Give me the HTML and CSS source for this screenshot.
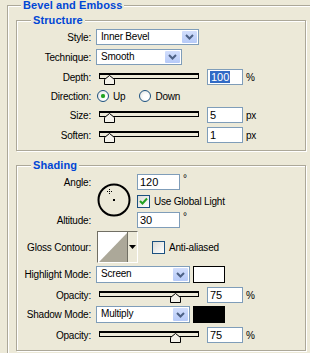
FILE: index.html
```html
<!DOCTYPE html>
<html>
<head>
<meta charset="utf-8">
<link rel="stylesheet" href="styles.css">
</head>
<body>
<section class="group outer">
  <h1 class="title t-outer">Bevel and Emboss</h1>

  <section class="group sub structure">
    <h2 class="title t-sub">Structure</h2>

    <div class="row">
      <span class="lbl">Style:</span>
      <div class="select w-style"><span class="val">Inner Bevel</span><span class="btn"><svg width="9" height="6" viewBox="0 0 9 6"><path d="M1 1 L4.5 4.5 L8 1" fill="none" stroke="#4D6185" stroke-width="2"/></svg></span></div>
    </div>

    <div class="row">
      <span class="lbl">Technique:</span>
      <div class="select w-tech"><span class="val">Smooth</span><span class="btn"><svg width="9" height="6" viewBox="0 0 9 6"><path d="M1 1 L4.5 4.5 L8 1" fill="none" stroke="#4D6185" stroke-width="2"/></svg></span></div>
    </div>

    <div class="row">
      <span class="lbl">Depth:</span>
      <div class="slider"><div class="track"><svg class="thumb" style="left:4px" width="11" height="10" viewBox="0 0 11 10"><path d="M0.5 9.5 V4.5 L5.5 0.5 L10.5 4.5 V9.5 Z" fill="#F4F2EA" stroke="#000"/></svg></div></div>
      <span class="num"><span class="selected">100</span></span><span class="unit">%</span>
    </div>

    <div class="row dir">
      <span class="lbl">Direction:</span>
      <span class="radio on"></span><span class="rtext">Up</span>
      <span class="radio r2"></span><span class="rtext">Down</span>
    </div>

    <div class="row">
      <span class="lbl">Size:</span>
      <div class="slider"><div class="track"><svg class="thumb" style="left:4px" width="11" height="10" viewBox="0 0 11 10"><path d="M0.5 9.5 V4.5 L5.5 0.5 L10.5 4.5 V9.5 Z" fill="#F4F2EA" stroke="#000"/></svg></div></div>
      <span class="num">5</span><span class="unit">px</span>
    </div>

    <div class="row">
      <span class="lbl">Soften:</span>
      <div class="slider"><div class="track"><svg class="thumb" style="left:4px" width="11" height="10" viewBox="0 0 11 10"><path d="M0.5 9.5 V4.5 L5.5 0.5 L10.5 4.5 V9.5 Z" fill="#F4F2EA" stroke="#000"/></svg></div></div>
      <span class="num">1</span><span class="unit">px</span>
    </div>
  </section>

  <section class="group sub shading">
    <h2 class="title t-sub">Shading</h2>

    <div class="angle-block">
      <span class="lbl c-angle">Angle:</span>
      <div class="dial">
        <svg width="34" height="34" viewBox="0 0 34 34">
          <circle cx="17" cy="17" r="15.5" fill="none" stroke="#000" stroke-width="2"/>
          <rect x="16" y="16" width="2" height="2" fill="#000"/>
          <path d="M12.5 6 V11 M10 8.5 H15" stroke="#000" stroke-width="1" stroke-dasharray="1 1"/>
        </svg>
      </div>
      <div class="ctl c-r1"><span class="num short">120</span><span class="deg">°</span></div>
      <div class="ctl c-r2"><span class="check on"><svg width="11" height="11" viewBox="0 0 11 11"><path d="M2 5 L4.5 7.5 L9 2.5" fill="none" stroke="#21A121" stroke-width="2"/></svg></span><span class="ctext">Use Global Light</span></div>
      <span class="lbl c-alt">Altitude:</span>
      <div class="ctl c-r3"><span class="num short">30</span><span class="deg">°</span></div>
    </div>

    <div class="row gloss">
      <span class="lbl">Gloss Contour:</span>
      <div class="contour">
        <svg class="curve" width="29" height="30" viewBox="0 0 29 30"><rect width="29" height="30" fill="#fff"/><path d="M1 30 L29 1 V30 Z" fill="#ACA899"/></svg>
        <span class="cdrop"><svg width="7" height="4" viewBox="0 0 7 4"><path d="M0 0 H7 L3.5 4 Z" fill="#000"/></svg></span>
      </div>
      <span class="check aa"></span><span class="ctext">Anti-aliased</span>
    </div>

    <div class="row mode">
      <span class="lbl">Highlight Mode:</span>
      <div class="select w-mode"><span class="val">Screen</span><span class="btn"><svg width="9" height="6" viewBox="0 0 9 6"><path d="M1 1 L4.5 4.5 L8 1" fill="none" stroke="#4D6185" stroke-width="2"/></svg></span></div>
      <span class="swatch white"></span>
    </div>

    <div class="row">
      <span class="lbl">Opacity:</span>
      <div class="slider"><div class="track"><svg class="thumb" style="left:70px" width="11" height="10" viewBox="0 0 11 10"><path d="M0.5 9.5 V4.5 L5.5 0.5 L10.5 4.5 V9.5 Z" fill="#F4F2EA" stroke="#000"/></svg></div></div>
      <span class="num">75</span><span class="unit">%</span>
    </div>

    <div class="row mode">
      <span class="lbl">Shadow Mode:</span>
      <div class="select w-mode"><span class="val">Multiply</span><span class="btn"><svg width="9" height="6" viewBox="0 0 9 6"><path d="M1 1 L4.5 4.5 L8 1" fill="none" stroke="#4D6185" stroke-width="2"/></svg></span></div>
      <span class="swatch black"></span>
    </div>

    <div class="row">
      <span class="lbl">Opacity:</span>
      <div class="slider"><div class="track"><svg class="thumb" style="left:70px" width="11" height="10" viewBox="0 0 11 10"><path d="M0.5 9.5 V4.5 L5.5 0.5 L10.5 4.5 V9.5 Z" fill="#F4F2EA" stroke="#000"/></svg></div></div>
      <span class="num">75</span><span class="unit">%</span>
    </div>
  </section>
</section>
</body>
</html>
```

FILE: styles.css
```css
html, body {
  margin: 0;
  padding: 0;
  background: #ECE9D8;
  overflow: hidden;
}
body {
  width: 310px;
  height: 353px;
  font-family: "Liberation Sans", Arial, sans-serif;
  font-size: 10px;
  letter-spacing: -0.2px;
  color: #000;
}

.group {
  position: relative;
  border: 1px solid #ACA899;
  box-shadow: 1px 1px 0 #fff, inset 1px 1px 0 #fff;
  box-sizing: border-box;
}
.outer {
  margin: 5px 0 0 7px;
  width: 303px;
  height: 348px;
  border-right: none;
  border-bottom: none;
  box-shadow: inset 1px 1px 0 #fff;
  padding-top: 14px;
}
.title {
  position: absolute;
  top: -6px;
  margin: 0;
  font-weight: bold;
  font-size: 11px;
  line-height: 11px;
  letter-spacing: 0.1px;
  color: #0046D5;
  background: #ECE9D8;
  padding: 0 2px;
}
.t-outer { left: 13px; }
.t-sub { left: 14px; }

.sub {
  margin-left: 8px;
  width: 290px;
}
.structure {
  padding: 8px 0 7px 0;
}
.shading {
  margin-top: 14px;
  padding: 8px 0 7px 0;
}

.row {
  display: flex;
  align-items: center;
  height: 16px;
  margin-top: 4px;
}
.structure > .row:first-of-type { margin-top: 0; }

.lbl {
  flex: none;
  width: 74px;
  margin-right: 5px;
  text-align: right;
  white-space: nowrap;
}

/* combo boxes */
.select {
  flex: none;
  display: flex;
  align-items: stretch;
  box-sizing: border-box;
  height: 16px;
  border: 1px solid #7F9DB9;
  background: #fff;
  padding: 1px;
}
.select .val {
  flex: 1;
  padding-left: 3px;
  line-height: 12px;
  white-space: nowrap;
}
.select .btn {
  flex: none;
  width: 15px;
  display: flex;
  align-items: center;
  justify-content: center;
  background: linear-gradient(#D2DEFC, #B6CAF8);
  border-radius: 1px;
}
.w-style { width: 103px; }
.w-tech { width: 86px; }
.w-mode { width: 94px; height: 17px; }
.mode { height: 17px; }

/* sliders */
.slider {
  flex: none;
  width: 111px;
  box-sizing: border-box;
  padding-left: 3px;
  align-self: flex-start;
  padding-top: 4px;
}
.track {
  position: relative;
  width: 100px;
  height: 6px;
  box-sizing: border-box;
  border: 1px solid #000;
  border-top-width: 2px;
  background: #ECE9D8;
}
.thumb {
  position: absolute;
  top: 0;
  display: block;
}

/* number fields */
.num {
  flex: none;
  width: 36px;
  height: 16px;
  box-sizing: border-box;
  border: 1px solid #7F9DB9;
  background: #fff;
  padding-left: 2px;
  line-height: 14px;
  font-size: 11px;
  letter-spacing: 0;
}
.num.short { width: 43px; }
.selected {
  background: #316AC5;
  color: #fff;
  padding: 0 1px;
}
.unit { margin-left: 3px; }
.deg { margin-left: 3px; align-self: flex-start; line-height: 10px; }

/* radios */
.dir { height: 14px; }
.radio {
  flex: none;
  width: 12px;
  height: 12px;
  box-sizing: border-box;
  border-radius: 50%;
  border: 1px solid #1C5180;
  background: radial-gradient(circle at 60% 60%, #fff 30%, #DCDCD7 100%);
  margin-left: 1px;
  display: flex;
  align-items: center;
  justify-content: center;
}
.radio.on::after {
  content: "";
  width: 4px;
  height: 4px;
  border-radius: 50%;
  background: #21A121;
  box-shadow: 0 0 1px #5ACD5A;
}
.radio.r2 { margin-left: 14px; }
.rtext { margin-left: 4px; }

/* checkboxes */
.check {
  flex: none;
  width: 13px;
  height: 13px;
  box-sizing: border-box;
  border: 1px solid #1C5180;
  background: linear-gradient(135deg, #DCDCD7, #fff);
  display: flex;
  align-items: center;
  justify-content: center;
}
.ctext { margin-left: 4px; white-space: nowrap; }

/* angle block */
.angle-block {
  display: grid;
  grid-template-columns: 79px 41px 1fr;
  grid-template-rows: 16px 22px 16px;
}
.c-angle { grid-column: 1; grid-row: 1; align-self: center; }
.c-alt { grid-column: 1; grid-row: 3; align-self: center; }
.dial {
  grid-column: 2;
  grid-row: 1 / 4;
  align-self: start;
  margin: 9px 0 0 1px;
  height: 34px;
}
.dial svg { display: block; }
.ctl { grid-column: 3; display: flex; align-items: center; }
.c-r1 { grid-row: 1; }
.c-r2 { grid-row: 2; }
.c-r3 { grid-row: 3; }

/* gloss contour */
.gloss {
  height: 32px;
  margin-top: 3px;
}
.contour {
  flex: none;
  display: flex;
  margin-left: 1px;
  width: 41px;
  height: 32px;
  box-sizing: border-box;
  border: 1px solid;
  border-color: #716F64 #fff #fff #716F64;
  background: #ECE9D8;
}
.curve { display: block; }
.cdrop {
  flex: 1;
  display: flex;
  align-items: center;
  justify-content: center;
  border-left: 1px solid #716F64;
}
.check.aa { margin-left: 14px; }

.swatch {
  flex: none;
  width: 32px;
  height: 17px;
  box-sizing: border-box;
  margin-left: 3px;
  border: 1px solid #000;
}
.swatch.white { background: #fff; }
.swatch.black { background: #000; }
.shading > .row.mode { margin-top: 3px; }
```
